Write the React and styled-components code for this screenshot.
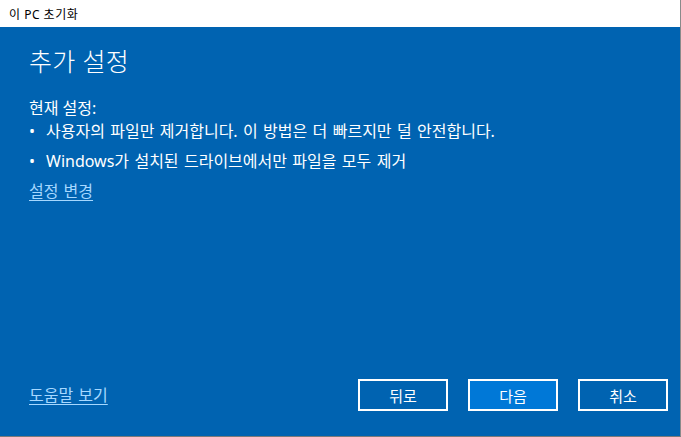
import React from "react";
import styled, { createGlobalStyle } from "styled-components";

const Global = createGlobalStyle`
  html, body { margin: 0; padding: 0; background: #ffffff; }
  body { font-family: "Noto Sans", "Noto Sans CJK KR", sans-serif; }
`;

const Window = styled.div`
  width: 681px;
  height: 437px;
  box-sizing: border-box;
  border-right: 1px solid #8a8a8a;
  border-bottom: 1px solid #7a7a7a;
  display: flex;
  flex-direction: column;
  overflow: hidden;
`;

const TitleBar = styled.div`
  height: 27px;
  flex: none;
  background: #ffffff;
  display: flex;
  align-items: center;
  padding-left: 9px;
  font-size: 12px;
  letter-spacing: 0.5px;
  color: #000000;
`;

const Body = styled.div`
  flex: 1;
  background: #0063b1;
  color: #ffffff;
  display: flex;
  flex-direction: column;
  padding: 18px 12px 25px 29px;
`;

const Heading = styled.h1`
  margin: 0;
  font-size: 25px;
  font-weight: 300;
  line-height: 32px;
  letter-spacing: 0.3px;
`;

const Label = styled.div`
  margin-top: 21px;
  font-size: 16px;
  line-height: 20px;
`;

const List = styled.ul`
  margin: 3px 0 0 0;
  padding: 0;
  list-style: none;
  display: flex;
  flex-direction: column;
  gap: 10px;
`;

const Item = styled.li`
  display: flex;
  font-size: 16px;
  line-height: 20px;
  word-spacing: 1.2px;
  &::before {
    content: "•";
    width: 17px;
    flex: none;
  }
`;

const Link = styled.a`
  color: #a6d8ff;
  font-size: 16px;
  line-height: 20px;
  text-decoration: underline;
  text-underline-offset: 3px;
  word-spacing: 1px;
  align-self: flex-start;
  margin-top: ${(p) => p.$top || 0}px;
  cursor: pointer;
`;

const Spacer = styled.div`
  flex: 1;
`;

const Footer = styled.div`
  display: flex;
  align-items: center;
`;

const Buttons = styled.div`
  margin-left: auto;
  display: flex;
  gap: 20px;
`;

const Button = styled.button`
  width: 90px;
  height: 32px;
  box-sizing: border-box;
  border: 2px solid #ffffff;
  background: ${(p) => (p.$primary ? "#0078d7" : "transparent")};
  color: #ffffff;
  font-family: inherit;
  font-size: 15px;
  padding: 0;
  cursor: pointer;
`;

export default function App() {
  return (
    <>
      <Global />
      <Window>
        <TitleBar>이 PC 초기화</TitleBar>
        <Body>
          <Heading>추가 설정</Heading>
          <Label>현재 설정:</Label>
          <List>
            <Item>사용자의 파일만 제거합니다. 이 방법은 더 빠르지만 덜 안전합니다.</Item>
            <Item>Windows가 설치된 드라이브에서만 파일을 모두 제거</Item>
          </List>
          <Link $top={10}>설정 변경</Link>
          <Spacer />
          <Footer>
            <Link $top={6}>도움말 보기</Link>
            <Buttons>
              <Button>뒤로</Button>
              <Button $primary>다음</Button>
              <Button>취소</Button>
            </Buttons>
          </Footer>
        </Body>
      </Window>
    </>
  );
}
